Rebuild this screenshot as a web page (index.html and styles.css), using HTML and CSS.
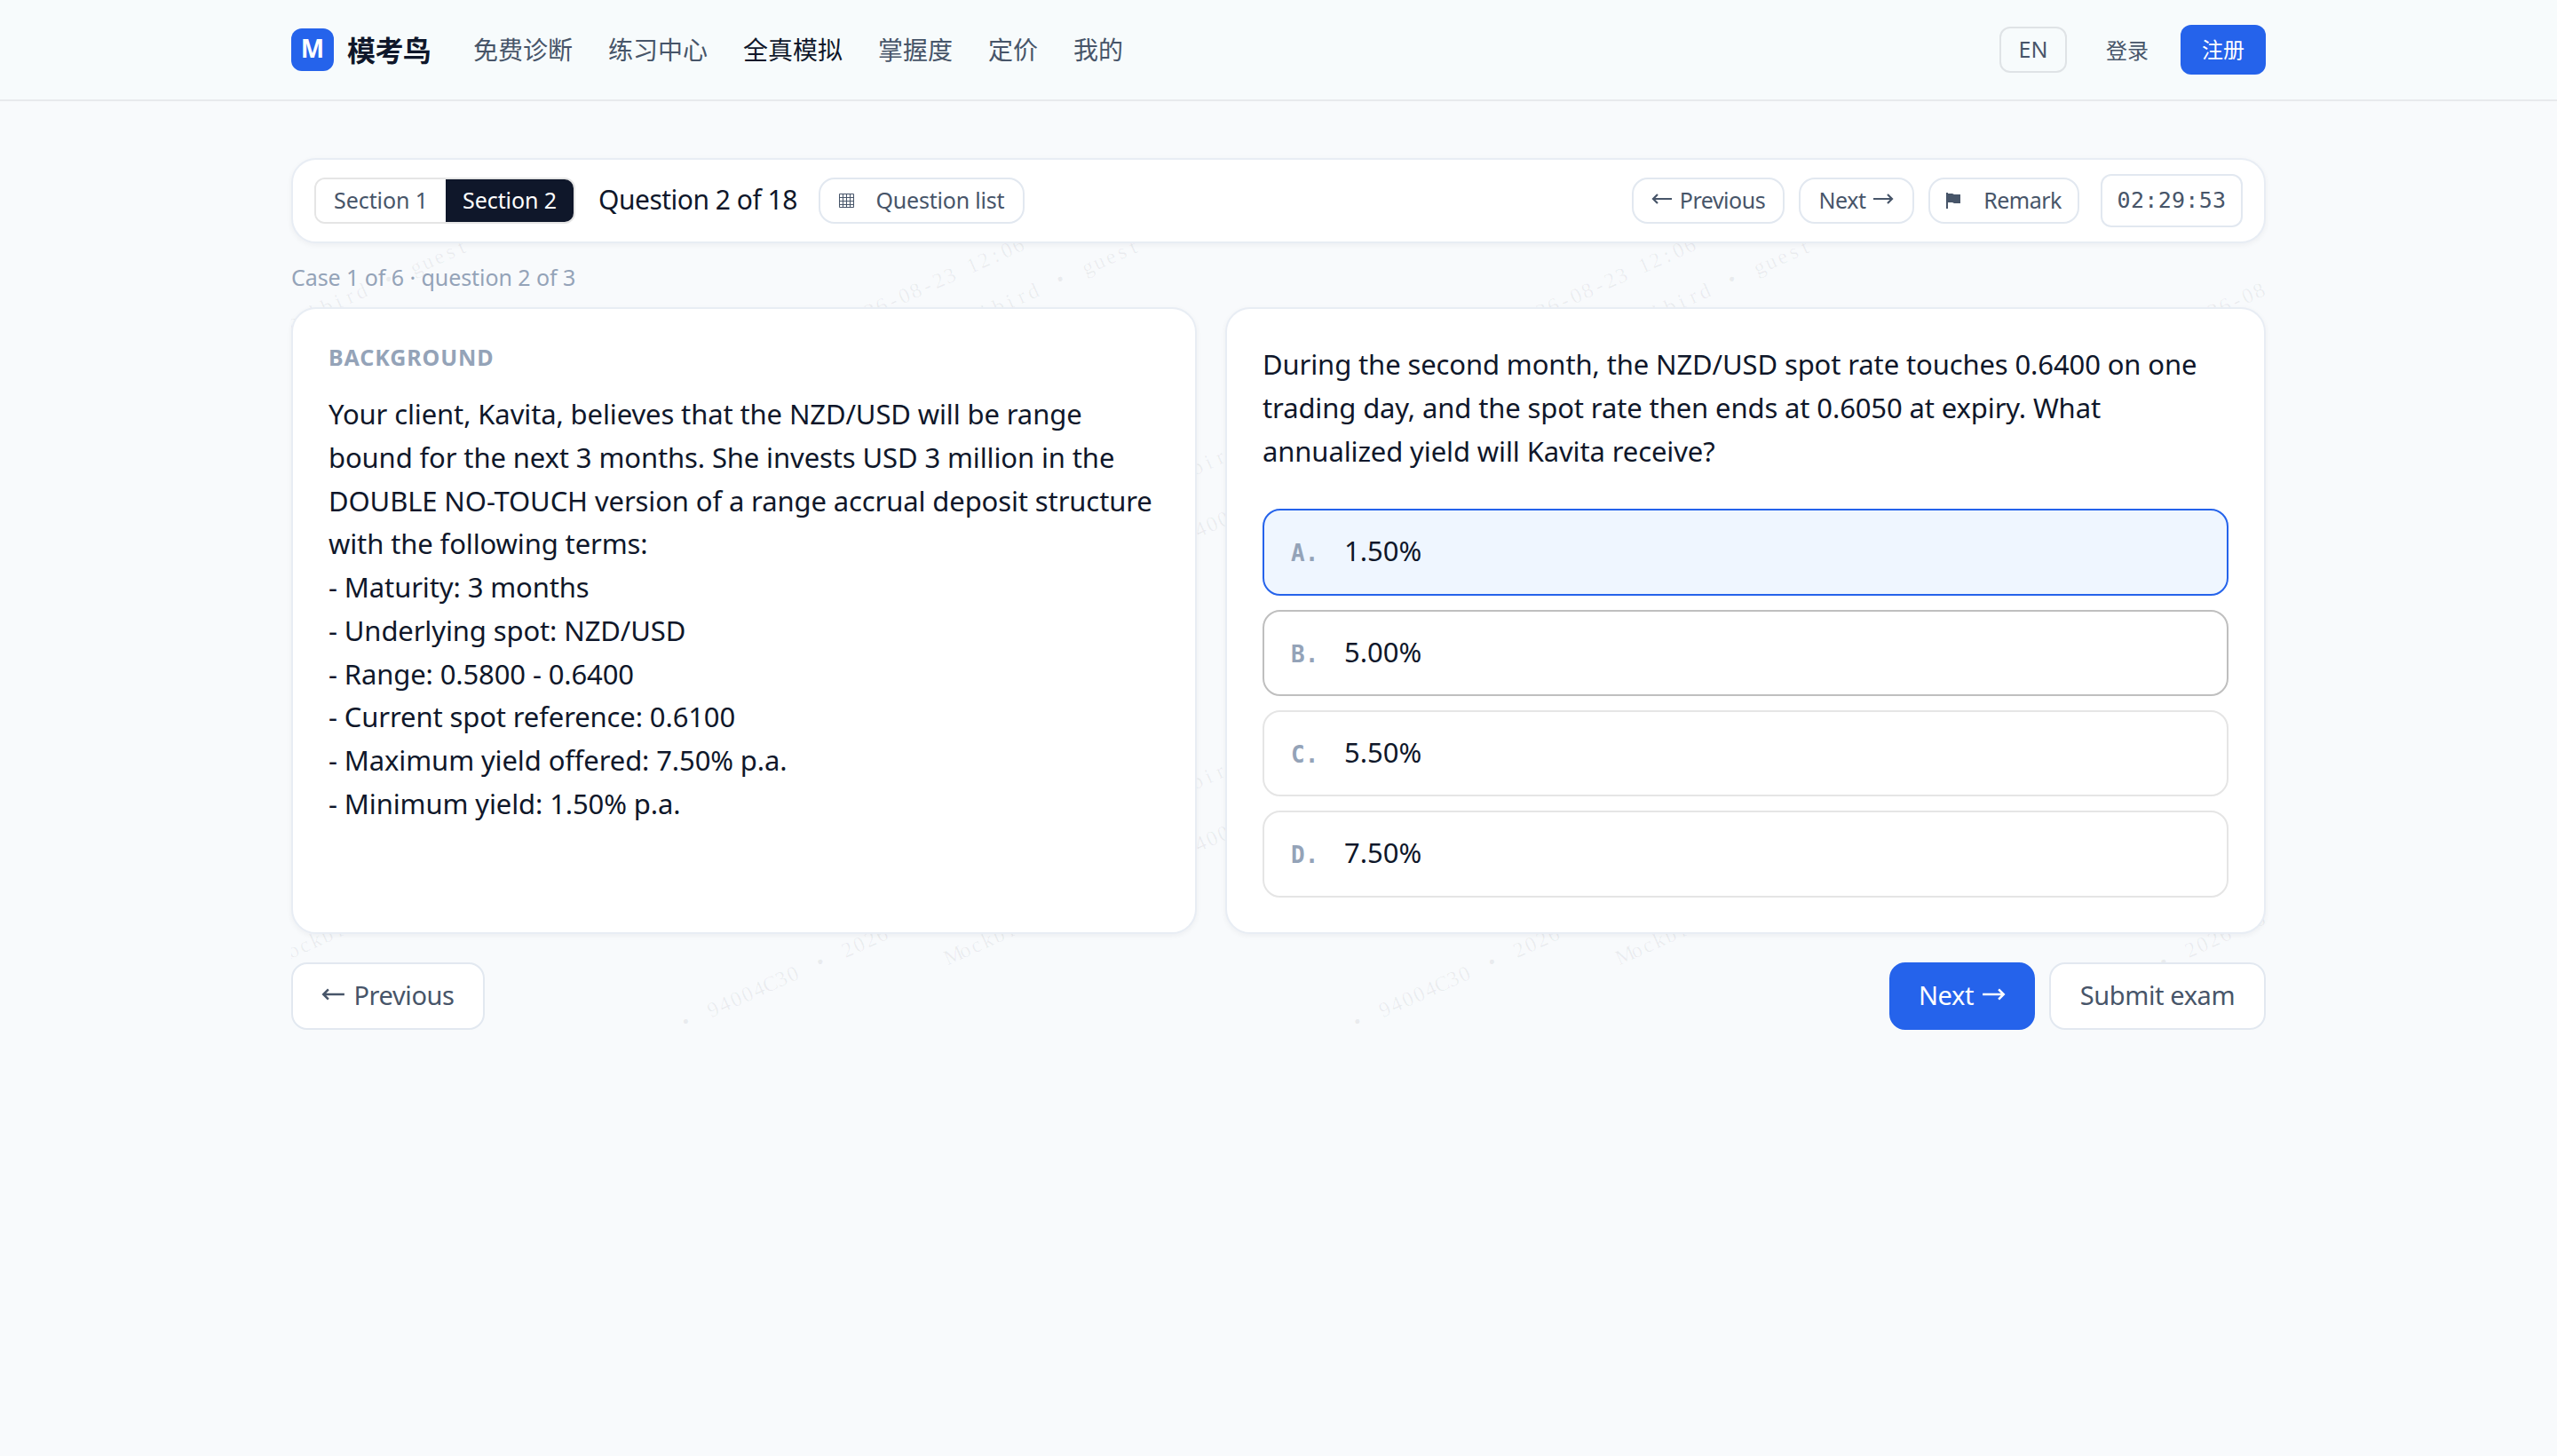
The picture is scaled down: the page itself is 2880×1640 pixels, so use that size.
FILE: index.html
```html
<!DOCTYPE html>
<html lang="zh-CN">
<head>
    <meta charset="UTF-8">
    <title>模考鸟</title>
    <link rel="stylesheet" href="styles.css">
</head>
<body>
    <header class="site-header">
        <div class="container header-row">
            <a class="brand"><span class="brand-logo">M</span><span class="brand-name">模考鸟</span></a>
            <nav class="main-nav">
                <a>免费诊断</a>
                <a>练习中心</a>
                <a class="active">全真模拟</a>
                <a>掌握度</a>
                <a>定价</a>
                <a>我的</a>
            </nav>
            <div class="header-actions">
                <button class="lang-btn">EN</button>
                <a class="login">登录</a>
                <button class="register">注册</button>
            </div>
        </div>
    </header>

    <main class="container exam">
        <!-- watermark, filled in by watermark.js -->
        <svg class="watermark" id="marks" width="2224" height="982"></svg>

        <section class="card toolbar">
            <div class="sections">
                <button class="section-btn">Section 1</button>
                <button class="section-btn current">Section 2</button>
            </div>
            <div class="counter">Question 2 of 18</div>
            <button class="tool-btn list-btn">
                <svg class="grid-icon" viewBox="0 0 18 17"><path d="M.5.5h16v15H.5zM4.5.5v15M8.5.5v15M12.5.5v15M.5 4.5h16M.5 8.5h16M.5 12.5h16"/></svg>
                <span>Question list</span>
            </button>
            <div class="toolbar-right">
                <button class="tool-btn prev-btn"><svg class="arrow" viewBox="0 0 24 14"><path d="M23 7H2M7 2L2 7l5 5"/></svg><span>Previous</span></button>
                <button class="tool-btn next-btn"><span>Next</span><svg class="arrow" viewBox="0 0 24 14"><path d="M1 7h21M17 2l5 5-5 5"/></svg></button>
                <button class="tool-btn remark-btn"><svg class="flag-icon" viewBox="0 0 16 18"><path d="M0 0h2v1h5l2 1h7v10H9L7 11H2v7H0z"/></svg><span>Remark</span></button>
                <div class="timer">02:29:53</div>
            </div>
        </section>

        <p class="case-info">Case 1 of 6 · question 2 of 3</p>

        <div class="columns">
            <section class="card panel">
                <h2 class="panel-title">BACKGROUND</h2>
                <div class="passage">Your client, Kavita, believes that the NZD/USD will be range<br>bound for the next 3 months. She invests USD 3 million in the<br>DOUBLE NO-TOUCH version of a range accrual deposit structure<br>with the following terms:<br>- Maturity: 3 months<br>- Underlying spot: NZD/USD<br>- Range: 0.5800 - 0.6400<br>- Current spot reference: 0.6100<br>- Maximum yield offered: 7.50% p.a.<br>- Minimum yield: 1.50% p.a.</div>
            </section>
            <section class="card panel question-panel">
                <div class="passage">During the second month, the NZD/USD spot rate touches 0.6400 on one<br>trading day, and the spot rate then ends at 0.6050 at expiry. What<br>annualized yield will Kavita receive?</div>
                <div class="options">
                    <div class="option selected"><span class="letter">A.</span><span>1.50%</span></div>
                    <div class="option hovered"><span class="letter">B.</span><span>5.00%</span></div>
                    <div class="option"><span class="letter">C.</span><span>5.50%</span></div>
                    <div class="option"><span class="letter">D.</span><span>7.50%</span></div>
                </div>
            </section>
        </div>

        <footer class="exam-footer">
            <button class="big-btn big-prev"><svg class="arrow" viewBox="0 0 24 14"><path d="M23 7H2M7 2L2 7l5 5"/></svg><span>Previous</span></button>
            <button class="big-btn primary"><span>Next</span><svg class="arrow" viewBox="0 0 24 14"><path d="M1 7h21M17 2l5 5-5 5"/></svg></button>
            <button class="big-btn submit"><span>Submit exam</span></button>
        </footer>
    </main>

    <script src="watermark.js"></script>
</body>
</html>
```
FILE: watermark.js
```js
var svg = document.getElementById('marks');
var TILE_W = 756.5;
var TILE_H = 354;

// every character gets its own x, so the text keeps a fixed pitch
function mark(x, y, text) {
    var t = document.createElementNS('http://www.w3.org/2000/svg', 'text');
    var xs = [];
    var pos = 0;
    for (var i = 0; i < text.length; i++) {
        var adv = text[i] === '•' ? 25.6 : 14;
        xs.push((pos + adv / 2).toFixed(1));
        pos += adv;
    }
    t.setAttribute('x', xs.join(' '));
    t.setAttribute('transform', 'translate(' + x + ' ' + y + ') rotate(-24)');
    t.textContent = text;
    svg.appendChild(t);
}

for (var col = 0; col < 3; col++) {
    for (var row = 0; row < 3; row += 2) {
        mark(-14 + col * TILE_W, 200 + row * TILE_H, 'Mockbird • guest');
        mark(436 + col * TILE_W, 277 + row * TILE_H, '• 94004C30 • 2026-08-23 12:06');
    }
}

// marks that cross the gap between the two panels
for (var i = 0; i < 2; i++) {
    mark(966, 381 + i * TILE_H, 'Mockbird • guest');
    mark(972, 450 + i * TILE_H, '• 94004C30');
}
```
FILE: styles.css
```css
* {
    box-sizing: border-box;
}
body {
    margin: 0;
    min-height: 1640px;
    background: #f8fafc;
    color: #0f172a;
    font-family: "Noto Sans", "Noto Sans CJK SC", sans-serif;
}
button {
    font-family: inherit;
    cursor: pointer;
}
.container {
    width: 2224px;
    margin: 0 auto;
}

/* header */
.site-header {
    height: 114px;
    background: #f7fbfc;
    border-bottom: 2px solid #e8eaed;
}
.header-row {
    height: 112px;
    display: flex;
    align-items: center;
}
.brand {
    display: flex;
    align-items: center;
    gap: 15px;
    width: 205px;
}
.brand-logo {
    width: 48px;
    height: 48px;
    border-radius: 12px;
    background: #2563eb;
    color: #fff;
    font-size: 28px;
    font-weight: 700;
    line-height: 45px;
    text-align: center;
}
.brand-name {
    padding-bottom: 2px;
    font-size: 32px;
    font-weight: 700;
    letter-spacing: -0.6px;
    white-space: nowrap;
}
.main-nav {
    display: flex;
    gap: 40px;
    padding-bottom: 2px;
    font-size: 28px;
    color: #475569;
}
.main-nav .active {
    color: #0f172a;
}
.header-actions {
    margin-left: auto;
    display: flex;
    align-items: center;
    font-size: 24px;
    color: #475569;
}
.lang-btn {
    width: 76px;
    height: 52px;
    padding: 0 0 2px;
    border: 2px solid #dfe3e6;
    border-radius: 12px;
    background: transparent;
    color: #475569;
    font-size: 25px;
}
.login {
    margin: 0 36px 0 44px;
    padding-bottom: 2px;
}
.register {
    width: 96px;
    height: 56px;
    padding: 0 0 3px;
    border: 0;
    border-radius: 12px;
    background: #2563eb;
    color: #fff;
    font-size: 24px;
}

/* exam page */
.exam {
    position: relative;
    padding-top: 64px;
}
.watermark {
    position: absolute;
    top: 64px;
    left: 0;
    fill: #0f172a;
    fill-opacity: 0.06;
    font: 24px "Liberation Serif", serif;
    text-anchor: middle;
    white-space: pre;
}
.card {
    position: relative;
    background: #fff;
    border: 2px solid #e8edf4;
    border-radius: 28px;
    box-shadow: 0 2px 6px rgba(15, 23, 42, 0.05);
}
.toolbar {
    height: 96px;
    padding: 0 24px;
    display: flex;
    align-items: center;
}
.sections {
    display: flex;
    flex: none;
    width: 294px;
    height: 52px;
    border: 2px solid #e5e5e5;
    border-radius: 12px;
    overflow: hidden;
}
.section-btn {
    width: 146px;
    padding: 0 0 3px;
    border: 0;
    background: #fff;
    color: #475569;
    font-size: 25px;
    letter-spacing: -0.1px;
}
.section-btn.current {
    width: 144px;
    background: #0f172a;
    color: #fff;
}
.counter {
    flex: none;
    width: 274px;
    padding: 0 0 3px 26px;
    font-size: 30px;
    letter-spacing: -0.5px;
    white-space: nowrap;
}
.tool-btn {
    display: flex;
    align-items: center;
    justify-content: center;
    height: 52px;
    padding: 0;
    border: 2px solid #e2e8f0;
    border-radius: 18px;
    background: #fff;
    color: #475569;
    font-size: 25px;
    letter-spacing: -0.5px;
}
.tool-btn span,
.big-btn span {
    padding-bottom: 3px;
}
.list-btn {
    width: 232px;
    gap: 24px;
    letter-spacing: -0.2px;
}
.grid-icon {
    width: 18px;
    height: 17px;
    fill: none;
    stroke: #475569;
    stroke-width: 1;
}
.flag-icon {
    width: 16px;
    height: 18px;
    fill: #475569;
}
.arrow {
    width: 24px;
    height: 14px;
    margin-bottom: 4px;
    fill: none;
    stroke: currentColor;
    stroke-width: 2.2;
}
.toolbar-right {
    margin-left: auto;
    display: flex;
    align-items: center;
    gap: 16px;
}
.prev-btn {
    width: 172px;
    gap: 8px;
}
.next-btn {
    width: 130px;
    gap: 8px;
}
.remark-btn {
    width: 170px;
    gap: 26px;
}
.timer {
    width: 160px;
    height: 60px;
    margin-left: 8px;
    border: 2px solid #e2e8f0;
    border-radius: 12px;
    color: #475569;
    font-family: "DejaVu Sans Mono", monospace;
    font-size: 25px;
    line-height: 55px;
    letter-spacing: 0.3px;
    text-align: center;
}
.case-info {
    position: relative;
    height: 72px;
    margin: 0;
    color: #94a3b8;
    font-size: 25px;
    line-height: 77px;
    letter-spacing: -0.07px;
}
.columns {
    display: grid;
    grid-template-columns: 1020px 1172px;
    gap: 32px;
}
.panel {
    height: 706px;
    padding: 36px 40px;
}
.panel-title {
    margin: 0 0 22px;
    color: #94a3b8;
    font-size: 25px;
    font-weight: 700;
    line-height: 36px;
    letter-spacing: 0.9px;
}
.passage {
    font-size: 31px;
    line-height: 48.75px;
    letter-spacing: -0.12px;
    white-space: nowrap;
}
.question-panel {
    padding-top: 38px;
}
.options {
    display: flex;
    flex-direction: column;
    gap: 16px;
    margin-top: 41px;
}
.option {
    display: flex;
    align-items: baseline;
    height: 97.33px;
    padding: 23px 0 0 30px;
    border: 2px solid #e5e5e5;
    border-radius: 20px;
    font-size: 31px;
    line-height: 45px;
}
.option.selected {
    border-color: #2563eb;
    background: #eff6ff;
}
.option.hovered {
    border-color: #bfbfbf;
}
.letter {
    width: 60px;
    color: #94a3b8;
    font-family: "DejaVu Sans Mono", monospace;
    font-size: 26px;
    font-weight: 700;
}
.exam-footer {
    position: relative;
    display: flex;
    gap: 16px;
    margin-top: 32px;
}
.big-btn {
    display: flex;
    align-items: center;
    justify-content: center;
    gap: 9px;
    height: 76px;
    padding: 0;
    border: 2px solid #e2e8f0;
    border-radius: 18px;
    background: #fff;
    color: #475569;
    font-size: 29px;
    letter-spacing: -0.4px;
}
.big-btn .arrow {
    width: 27px;
    height: 16px;
}
.big-prev {
    width: 218px;
    margin-right: auto;
}
.primary {
    width: 164px;
    border-color: #2563eb;
    background: #2563eb;
    color: #fff;
}
.submit {
    width: 244px;
}
```
